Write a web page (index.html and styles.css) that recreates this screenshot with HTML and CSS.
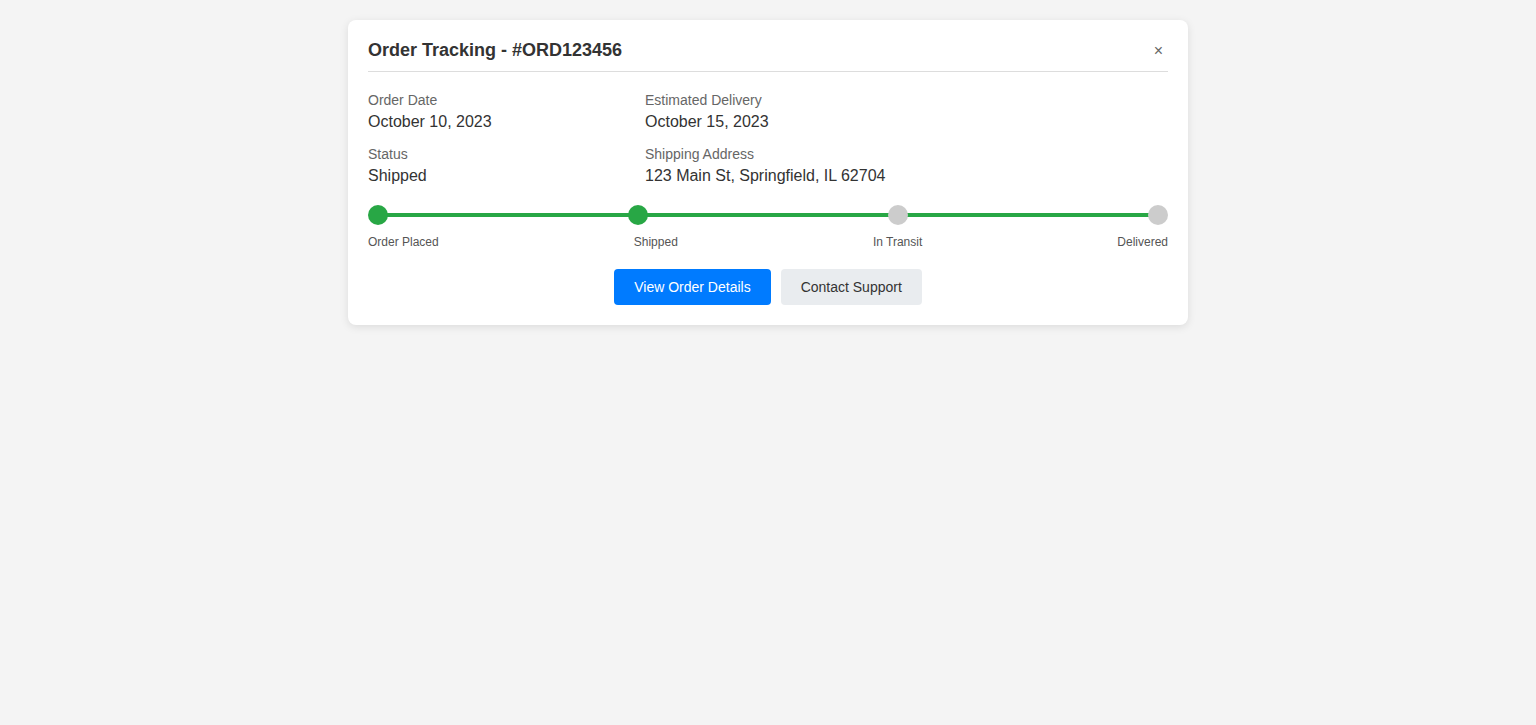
FILE: index.html
```html
<!DOCTYPE html>
<html lang="en">
<head>
<meta charset="utf-8">
<title>Order Tracking</title>
<link rel="stylesheet" href="styles.css">
</head>
<body>
<div class="card">
  <div class="card-header">
    <h2 class="title">Order Tracking - #ORD123456</h2>
    <button class="close" aria-label="Close">×</button>
  </div>
  <div class="info">
    <div class="item">
      <div class="label">Order Date</div>
      <div class="value">October 10, 2023</div>
    </div>
    <div class="item">
      <div class="label">Estimated Delivery</div>
      <div class="value">October 15, 2023</div>
    </div>
    <div class="item">
      <div class="label">Status</div>
      <div class="value">Shipped</div>
    </div>
    <div class="item">
      <div class="label">Shipping Address</div>
      <div class="value">123 Main St, Springfield, IL 62704</div>
    </div>
  </div>
  <div class="progress">
    <div class="track">
      <div class="line"></div>
      <span class="dot done"></span>
      <span class="dot done"></span>
      <span class="dot"></span>
      <span class="dot"></span>
    </div>
    <div class="steps">
      <span>Order Placed</span>
      <span>Shipped</span>
      <span>In Transit</span>
      <span>Delivered</span>
    </div>
  </div>
  <div class="actions">
    <button class="btn primary">View Order Details</button>
    <button class="btn secondary">Contact Support</button>
  </div>
</div>
</body>
</html>
```
FILE: styles.css
```css
* { box-sizing: border-box; }
body {
  margin: 0;
  padding: 20px;
  background: #f4f4f4;
  font-family: "Liberation Sans", Arial, sans-serif;
  color: #333;
}
.card {
  width: 840px;
  margin: 0 auto;
  background: #fff;
  border-radius: 8px;
  box-shadow: 0 2px 8px rgba(0,0,0,0.1);
  padding: 20px;
}
.card-header {
  display: flex;
  justify-content: space-between;
  align-items: center;
  border-bottom: 1px solid #ddd;
  padding-bottom: 10px;
  margin-bottom: 20px;
}
.title {
  margin: 0;
  font-size: 18px;
  line-height: 21px;
  font-weight: bold;
  color: #333;
}
.close {
  border: none;
  background: none;
  padding: 0 5px;
  font-family: "Liberation Sans", Arial, sans-serif;
  font-size: 16px;
  line-height: 21px;
  color: #666;
  cursor: pointer;
}
.info {
  display: grid;
  grid-template-columns: 277px 1fr;
}
.item { margin-bottom: 15px; }
.label {
  font-size: 14px;
  line-height: 16px;
  color: #666;
  margin-bottom: 5px;
}
.value {
  font-size: 16px;
  line-height: 18px;
  color: #333;
}
.progress { margin-top: 5px; }
.track {
  position: relative;
  display: flex;
  justify-content: space-between;
  align-items: center;
  height: 20px;
}
.line {
  position: absolute;
  left: 10px;
  right: 10px;
  top: 8px;
  height: 4px;
  background: #28a745;
}
.dot {
  position: relative;
  width: 20px;
  height: 20px;
  border-radius: 50%;
  background: #ccc;
}
.dot.done { background: #28a745; }
.steps {
  display: flex;
  justify-content: space-between;
  margin-top: 10px;
  font-size: 12px;
  line-height: 14px;
  color: #555;
}
.actions {
  display: flex;
  justify-content: center;
  gap: 10px;
  margin-top: 20px;
}
.btn {
  border: none;
  border-radius: 4px;
  padding: 10px 20px;
  font-family: "Liberation Sans", Arial, sans-serif;
  font-size: 14px;
  line-height: 16px;
  cursor: pointer;
}
.primary { background: #007bff; color: #fff; }
.secondary { background: #e9ecef; color: #333; }
```
